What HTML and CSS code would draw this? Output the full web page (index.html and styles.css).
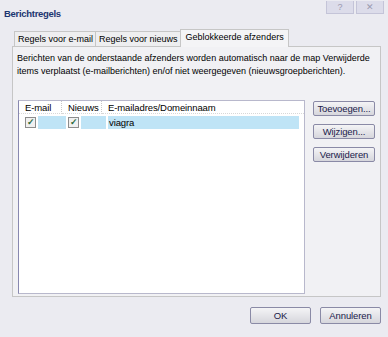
FILE: index.html
```html
<!DOCTYPE html>
<html lang="nl">
<head>
  <meta charset="UTF-8" />
  <title>Berichtregels</title>
  <link rel="stylesheet" href="styles.css">
</head>
<body>
  <div class="dialog">
    <div class="titlebar">
      <span class="title">Berichtregels</span>
      <div class="caption-buttons">
        <span class="cap-btn">?</span>
        <span class="cap-btn">&#x2715;</span>
      </div>
    </div>

    <div class="tabs">
      <div class="tab">Regels voor e-mail</div>
      <div class="tab">Regels voor nieuws</div>
      <div class="tab active">Geblokkeerde afzenders</div>
    </div>

    <div class="panel">
      <p class="desc">Berichten van de onderstaande afzenders worden automatisch naar de map Verwijderde<br>items verplaatst (e-mailberichten) en/of niet weergegeven (nieuwsgroepberichten).</p>
      <div class="content">
        <div class="list">
          <div class="list-head">
            <div class="col col-mail">E-mail</div>
            <div class="col col-news">Nieuws</div>
            <div class="col col-addr">E-mailadres/Domeinnaam</div>
          </div>
          <div class="list-row">
            <div class="cell cell-mail"><span class="check">&#x2713;</span><span class="hl"></span></div>
            <div class="cell cell-news"><span class="check">&#x2713;</span><span class="hl"></span></div>
            <div class="cell cell-addr hl-text">viagra</div>
          </div>
        </div>
        <div class="side">
          <button class="btn">Toevoegen...</button>
          <button class="btn">Wijzigen...</button>
          <button class="btn">Verwijderen</button>
        </div>
      </div>
    </div>

    <div class="footer">
      <button class="btn btn-big">OK</button>
      <button class="btn btn-big">Annuleren</button>
    </div>
  </div>
</body>
</html>
```

FILE: styles.css
```css
body {
  margin: 0;
  background: #ebebf1;
  font-family: "Liberation Sans", Arial, sans-serif;
  font-size: 9.5px;
  letter-spacing: -0.1px;
  color: #000;
}
.dialog {
  width: 388px;
  height: 337px;
  display: flex;
  flex-direction: column;
}
.titlebar {
  height: 30px;
  display: flex;
  justify-content: space-between;
  align-items: flex-start;
}
.title {
  font-weight: bold;
  color: #1c3570;
  font-size: 9.5px;
  letter-spacing: -0.3px;
  margin: 8px 0 0 4px;
}
.caption-buttons {
  display: flex;
  gap: 2px;
  margin: 1px 4px 0 0;
}
.cap-btn {
  width: 26px;
  height: 12px;
  background: #dcdcea;
  border: 1px solid #c4c4d8;
  border-top: none;
  color: #9a9ab0;
  font-size: 9px;
  line-height: 12px;
  text-align: center;
}
.tabs {
  display: flex;
  margin-left: 14px;
  height: 16px;
  align-items: flex-end;
  font-size: 9px;
  letter-spacing: 0;
}
.tab {
  height: 14px;
  line-height: 14px;
  padding: 0 2px 0 3px;
  border: 1px solid #c6c6c6;
  border-bottom: none;
  background: #eeeef0;
  margin-right: -1px;
}
.tab.active {
  line-height: 15px;
  background: #f4f4f6;
  padding: 0 4px 0 5px;
  position: relative;
  z-index: 1;
  margin-bottom: -1px;
  height: 17px;
}
.panel {
  margin: 0 7px 0 12px;
  height: 249px;
  border: 1px solid #c6c6c6;
  background: #f1f1f4;
  padding: 0 0 0 5px;
}
.desc {
  margin: 5px 0 0 -1px;
  line-height: 13px;
  font-size: 9px;
  letter-spacing: 0;
  white-space: nowrap;
}
.content {
  display: flex;
  margin-top: 22px;
}
.list {
  width: 285px;
  height: 192px;
  background: #fff;
  border: 1px solid #b8b8cc;
  border-left-color: #8888b0;
}
.list-head {
  display: flex;
  height: 13px;
  line-height: 13px;
}
.col {
  border-right: 1px dotted #c8c8c8;
  border-bottom: 1px dotted #d8d8d8;
  padding-left: 6px;
}
.col-mail { width: 36px; }
.col-news { width: 33px; }
.col-addr { flex: 1; border-right: none; }
.list-row {
  display: flex;
  height: 13px;
  margin-top: 2px;
  line-height: 13px;
}
.cell {
  display: flex;
  align-items: center;
}
.cell-mail { width: 43px; padding-left: 6px; }
.cell-news { width: 40px; }
.cell-addr { width: 190px; padding-left: 1px; }
.check {
  width: 9px;
  height: 9px;
  border: 1px solid #8c8c8c;
  background: #f0f0f0;
  color: #2a6a3a;
  font-size: 9px;
  line-height: 9px;
  text-align: center;
  font-weight: bold;
}
.hl {
  flex: 1;
  height: 13px;
  margin-left: 2px;
  margin-right: 2px;
  background: #bfe4f6;
}
.hl-text {
  background: #bfe4f6;
}
.side {
  display: flex;
  flex-direction: column;
  gap: 8px;
  margin: 1px 0 0 8px;
}
.btn {
  font-family: "Liberation Sans", Arial, sans-serif;
  font-size: 9.5px;
  letter-spacing: -0.1px;
  color: #20204a;
  width: 62px;
  height: 15px;
  padding: 0;
  border: 1px solid #8a8aa6;
  border-radius: 2px;
  background: linear-gradient(#f4f4f6, #d6d6dc);
}
.footer {
  display: flex;
  justify-content: flex-end;
  gap: 9px;
  margin: 10px 7px 0 0;
}
.btn-big {
  width: 61px;
  height: 17px;
}
```
